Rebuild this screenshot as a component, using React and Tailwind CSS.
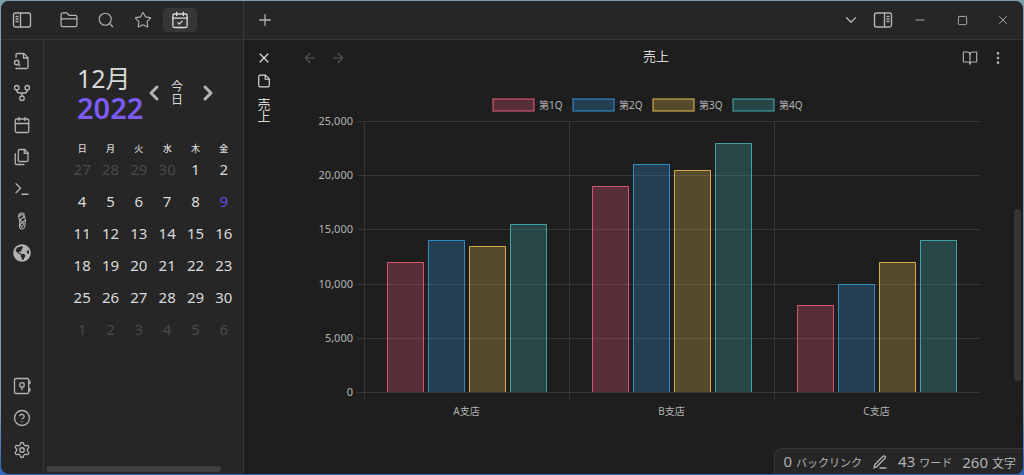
import {
  Calendar,
  ChevronDown,
  ChevronLeft,
  ChevronRight,
  CircleHelp,
  ArrowLeft,
  ArrowRight,
  BookOpen,
  EllipsisVertical,
  Minus,
  Plus,
  Search,
  Settings,
  Square,
  Star,
  Terminal,
  X,
} from 'lucide-react';
import { FaGlobeAmericas } from 'react-icons/fa';

const weekdays = ['日', '月', '火', '水', '木', '金'];

const weeks = [
  [27, 28, 29, 30, 1, 2],
  [4, 5, 6, 7, 8, 9],
  [11, 12, 13, 14, 15, 16],
  [18, 19, 20, 21, 22, 23],
  [25, 26, 27, 28, 29, 30],
  [1, 2, 3, 4, 5, 6],
];

const series = [
  { name: '第1Q', color: '#ff6384', values: [12000, 19000, 8000] },
  { name: '第2Q', color: '#36a2eb', values: [14000, 21000, 10000] },
  { name: '第3Q', color: '#ffce56', values: [13500, 20500, 12000] },
  { name: '第4Q', color: '#4bc0c0', values: [15500, 23000, 14000] },
];

const branches = ['A支店', 'B支店', 'C支店'];
const ticks = [0, 5000, 10000, 15000, 20000, 25000];

function Icon({ size = 18, width = 1.75, children }) {
  return (
    <svg
      width={size}
      height={size}
      viewBox="0 0 24 24"
      fill="none"
      stroke="currentColor"
      strokeWidth={width}
      strokeLinecap="round"
      strokeLinejoin="round"
      aria-hidden="true"
    >
      {children}
    </svg>
  );
}

function SidebarIcon({ flip }) {
  return (
    <svg
      width="20"
      height="18"
      viewBox="0 0 20 18"
      fill="none"
      stroke="currentColor"
      strokeWidth="1.4"
      className={flip ? '-scale-x-100' : ''}
      aria-hidden="true"
    >
      <rect x="1.5" y="2" width="17" height="14" rx="2" />
      <path d="M8.5 2v14M3.5 5.5h3M3.5 8h3M3.5 10.5h3" />
    </svg>
  );
}

function FolderIcon() {
  return (
    <Icon size={20} width={1.5}>
      <path d="M2.5 18V5.5a2 2 0 0 1 2-2h4.2a2 2 0 0 1 1.6.8L12 6.5h7.5a2 2 0 0 1 2 2V18a2 2 0 0 1-2 2h-15a2 2 0 0 1-2-2zM2.5 10.5h19" />
    </Icon>
  );
}

function CalendarCheckIcon() {
  return (
    <Icon size={18}>
      <rect x="2.5" y="4" width="19" height="18" rx="2" />
      <path d="M7.5 1.5V6M16.5 1.5V6M2.5 9.5h19M9 15.5l2 2 4-4" />
    </Icon>
  );
}

function FileSearchIcon() {
  return (
    <Icon>
      <path d="M4 22h14a2 2 0 0 0 2-2V7.5L14.5 2H6a2 2 0 0 0-2 2v3M14 2v6h6M9 18l-1.5-1.5" />
      <circle cx="5" cy="14" r="3" />
    </Icon>
  );
}

function GraphIcon() {
  return (
    <Icon>
      <circle cx="5" cy="5" r="3" />
      <circle cx="19" cy="5" r="3" />
      <circle cx="12" cy="19" r="3" />
      <path d="M5 8c0 3 2 4 4 4h6c2 0 4-1 4-4M12 12v4" />
    </Icon>
  );
}

function FilesIcon() {
  return (
    <Icon>
      <path d="M15.5 2H8.6c-.4 0-.8.2-1.1.5-.3.3-.5.7-.5 1.1v12.8c0 .4.2.8.5 1.1.3.3.7.5 1.1.5h9.8c.4 0 .8-.2 1.1-.5.3-.3.5-.7.5-1.1V6.5L15.5 2z" />
      <path d="M3 7.6v12.8c0 .4.2.8.5 1.1.3.3.7.5 1.1.5h9.8M15 2v5h5" />
    </Icon>
  );
}

function BraidIcon() {
  return (
    <Icon width={1.4}>
      <path d="M11 1.5c3-1 4 1 4 3.5 0 2 1.5 3 1.5 6s-.5 4-.5 6c0 3-1 5-3.5 5.5-3 .5-4-1.5-4-4.500 0-2 1-3 .5-6s-1.500-4-1.500-7c0-2 1.500-3 3.500-3.500z" />
      <path d="M8 6l4-3 3 3-6 5 6 5-4 4M16 11l-7 6 3 3" />
    </Icon>
  );
}

function VaultIcon() {
  return (
    <Icon>
      <rect x="2" y="2" width="19" height="20" rx="2" />
      <path d="M21 5.5h1.5v3H21M21 15.5h1.5v3H21M12 13.5V17" />
      <circle cx="12" cy="10.5" r="3" />
    </Icon>
  );
}

function FileIcon() {
  return (
    <Icon size={14} width={2}>
      <path d="M14.5 2H5a2 2 0 0 0-2 2v16a2 2 0 0 0 2 2h14a2 2 0 0 0 2-2V8.5zM14 2v7h7" />
    </Icon>
  );
}

function PencilIcon() {
  return (
    <Icon size={16} width={2}>
      <path d="M12 21h9M16.5 3.5a2.1 2.1 0 0 1 3 3L7 19l-4 2 1-5z" />
    </Icon>
  );
}

function IconButton({ label, className = '', children }) {
  return (
    <button type="button" aria-label={label} className={`flex items-center justify-center ${className}`}>
      {children}
    </button>
  );
}

function Header() {
  const tab = 'h-6 w-[34px] rounded-sm';
  return (
    <header className="flex h-[39px] shrink-0 border-b border-[#363636] bg-[#262626] text-[#b3b3b3]">
      <div className="flex w-[243px] shrink-0 items-center border-r border-[#363636]">
        <IconButton label="サイドバー" className="w-[42px]"><SidebarIcon /></IconButton>
        <div className="ml-[9px] flex gap-[3px]">
          <IconButton label="ファイル" className={tab}><FolderIcon /></IconButton>
          <IconButton label="検索" className={tab}><Search size={18} strokeWidth={1.5} /></IconButton>
          <IconButton label="スター" className={tab}><Star size={18} strokeWidth={1.5} /></IconButton>
          <IconButton label="カレンダー" className={`${tab} bg-[#363636] text-[#dadada]`}><CalendarCheckIcon /></IconButton>
        </div>
      </div>
      <IconButton label="新しいタブ" className="w-[42px]"><Plus size={18} strokeWidth={1.75} /></IconButton>
      <div className="ml-auto flex items-center">
        <IconButton label="タブ一覧" className="w-8"><ChevronDown size={18} strokeWidth={1.75} /></IconButton>
        <IconButton label="右サイドバー" className="w-8"><SidebarIcon flip /></IconButton>
        <IconButton label="最小化" className="w-[42px]"><Minus size={14} strokeWidth={1.5} /></IconButton>
        <IconButton label="最大化" className="w-[42px]"><Square size={11} strokeWidth={2} /></IconButton>
        <IconButton label="閉じる" className="w-10"><X size={14} strokeWidth={1.5} /></IconButton>
      </div>
    </header>
  );
}

function Ribbon() {
  const item = 'h-8 w-full';
  return (
    <nav className="flex w-[43px] shrink-0 flex-col border-r border-[#363636] pt-[5px] pb-2 text-[#b3b3b3]">
      <IconButton label="クイックスイッチャー" className={item}><FileSearchIcon /></IconButton>
      <IconButton label="グラフビュー" className={item}><GraphIcon /></IconButton>
      <IconButton label="デイリーノート" className={item}><Calendar size={18} strokeWidth={1.75} /></IconButton>
      <IconButton label="テンプレート" className={item}><FilesIcon /></IconButton>
      <IconButton label="コマンドパレット" className={item}><Terminal size={18} strokeWidth={1.75} /></IconButton>
      <IconButton label="プラグイン" className={item}><BraidIcon /></IconButton>
      <IconButton label="ブラウザ" className={item}><FaGlobeAmericas size={18} /></IconButton>
      <div className="mt-auto">
        <IconButton label="保管庫" className={item}><VaultIcon /></IconButton>
        <IconButton label="ヘルプ" className={item}><CircleHelp size={18} strokeWidth={1.75} /></IconButton>
        <IconButton label="設定" className={item}><Settings size={18} strokeWidth={1.75} /></IconButton>
      </div>
    </nav>
  );
}

function dayColor(row, day) {
  if ((row === 0 && day > 20) || row === 5) return 'text-[#4a4a4a]';
  if (row === 1 && day === 9) return 'text-[#6c4be0]';
  return 'text-[#dadada]';
}

function CalendarPane() {
  return (
    <aside className="flex w-[200px] shrink-0 flex-col overflow-hidden border-r border-[#363636] text-[#dadada]">
      <div className="flex items-center pt-6 pl-[33px]">
        <h2 className="w-[69px] text-[25px] leading-[29px]">
          <span className="block">12月</span>
          <span className="block text-[29px] font-semibold text-[#7c5cf5]">2022</span>
        </h2>
        <IconButton label="前の月" className="w-4"><ChevronLeft size={24} strokeWidth={3} className="shrink-0 text-[#b3b3b3]" /></IconButton>
        <button type="button" className="mx-[9px] w-3 text-xs leading-[13px]">今日</button>
        <IconButton label="次の月" className="ml-2 w-4"><ChevronRight size={24} strokeWidth={3} className="shrink-0 text-[#b3b3b3]" /></IconButton>
      </div>
      <table className="mt-[17px] ml-6 w-[170px] table-fixed text-center">
        <thead>
          <tr className="h-5">
            {weekdays.map(day => <th key={day} className="p-0 text-[9px] leading-3 font-medium">{day}</th>)}
          </tr>
        </thead>
        <tbody>
          {weeks.map((week, row) => (
            <tr key={row} className="h-8">
              {week.map(day => (
                <td key={day} className={`p-0 pb-3 text-[15px] leading-5 ${dayColor(row, day)}`}>{day}</td>
              ))}
            </tr>
          ))}
        </tbody>
      </table>
      <div className="mt-auto mb-0.5 ml-0.5 h-1.5 w-[175px] rounded-full bg-[#3f3f3f]" />
    </aside>
  );
}

function SalesChart() {
  const left = 65;
  const right = 681;
  const top = 30;
  const bottom = 301;
  const group = Math.floor((right - left) / branches.length);
  const y = value => Math.round(bottom - (value / 25000) * (bottom - top));

  return (
    <svg viewBox="0 0 690 330" className="block h-auto w-full font-['Noto_Sans','Noto_Sans_CJK_JP',sans-serif] text-[10px]" role="img" aria-label="売上">
      {ticks.map(tick => (
        <g key={tick}>
          <rect x={left - 7} y={y(tick)} width={right - left + 7} height="1" fill="#363636" />
          <text x={left - 11} y={y(tick) + 4} textAnchor="end" fill="#b3b3b3" className="text-[11px]">{tick.toLocaleString('en-US')}</text>
        </g>
      ))}
      {branches.map((branch, i) => (
        <g key={branch}>
          <rect x={left + i * group} y={top} width="1" height={bottom - top + 8} fill="#363636" />
          <text x={left + (i + 0.5) * group} y={bottom + 23} textAnchor="middle" fill="#b3b3b3">{branch}</text>
        </g>
      ))}
      {series.map((s, n) => (
        <g key={s.name}>
          <rect x={194 + n * 80} y="8" width="41" height="12" fill={s.color} fillOpacity="0.25" stroke={s.color} strokeOpacity="0.6" strokeWidth="1.5" />
          <text x={240 + n * 80} y="18" fill="#b3b3b3">{s.name}</text>
          {s.values.map((value, i) => {
            const x = left + i * group + 23 + n * 41;
            return (
              <g key={i}>
                <rect x={x} y={y(value)} width="37" height={bottom - y(value)} fill={s.color} fillOpacity="0.25" />
                <path
                  d={`M${x + 0.5} ${bottom}V${y(value) + 0.5}h36V${bottom}`}
                  fill="none"
                  stroke={s.color}
                  strokeOpacity="0.75"
                />
              </g>
            );
          })}
        </g>
      ))}
    </svg>
  );
}

function NotePane() {
  return (
    <main className="flex min-w-0 flex-1 bg-[#1e1e1e]">
      <div className="flex w-10 shrink-0 flex-col items-center gap-2 pt-2.5 text-[#dadada]">
        <IconButton label="タブを閉じる"><X size={16} strokeWidth={1.75} /></IconButton>
        <FileIcon />
        <span className="mt-0.5 w-[13px] text-[13px] leading-3">売上</span>
      </div>
      <div className="flex min-w-0 flex-1 flex-col">
        <div className="flex h-9 items-center pr-[17px] pl-[18px] text-[#b3b3b3]">
          <div className="flex w-16 gap-3 text-[#5a5a5a]">
            <IconButton label="戻る"><ArrowLeft size={16} strokeWidth={1.75} /></IconButton>
            <IconButton label="進む"><ArrowRight size={16} strokeWidth={1.75} /></IconButton>
          </div>
          <h1 className="flex-1 pb-0.5 text-center text-[13px] text-[#dadada]">売上</h1>
          <div className="flex w-[60px] justify-end gap-3">
            <IconButton label="閲覧モード"><BookOpen size={16} strokeWidth={1.75} /></IconButton>
            <IconButton label="その他"><EllipsisVertical size={16} strokeWidth={2} /></IconButton>
          </div>
        </div>
        <div className="flex flex-1">
          <div className="min-w-0 flex-1 pt-[15px] pl-[15px]">
            <SalesChart />
          </div>
          <div className="w-[34px] shrink-0 pt-[133px] pl-[25px]">
            <div className="h-[172px] w-[7px] rounded-full bg-[#363636]" />
          </div>
        </div>
      </div>
    </main>
  );
}

function StatusItem({ count, label, className = 'text-xs' }) {
  return (
    <span className="flex items-baseline gap-1 text-[15px] leading-6">
      {count} <span className={className}>{label}</span>
    </span>
  );
}

function StatusBar() {
  return (
    <footer className="absolute right-0 bottom-0 flex h-[26px] items-center gap-2.5 rounded-tl-lg border-t border-l border-[#363636] bg-[#262626] pr-[7px] pl-2 text-[#b3b3b3]">
      <StatusItem count={0} label="バックリンク" className="text-[11px]" />
      <PencilIcon />
      <StatusItem count={43} label="ワード" className="text-[11px]" />
      <StatusItem count={260} label="文字" />
    </footer>
  );
}

export default function App() {
  return (
    <div className="flex min-h-screen bg-linear-to-b from-[#7f9fb0] from-85% to-[#2f63b8] p-px font-['Noto_Sans','Noto_Sans_CJK_JP',sans-serif]">
      <div className="relative flex min-w-0 flex-1 flex-col overflow-hidden rounded-lg bg-[#262626]">
        <Header />
        <div className="flex flex-1">
          <Ribbon />
          <CalendarPane />
          <NotePane />
        </div>
        <StatusBar />
      </div>
    </div>
  );
}
